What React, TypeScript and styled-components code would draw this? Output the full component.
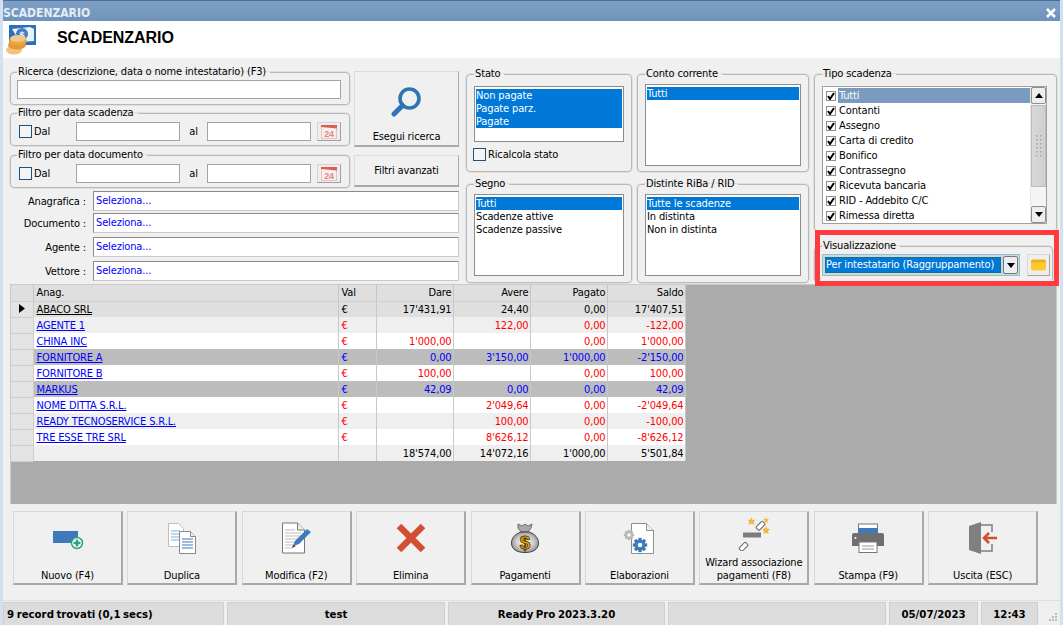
import React from "react";
import styled, { createGlobalStyle } from "styled-components";

const Global = createGlobalStyle`
  html, body { margin: 0; padding: 0; width: 1063px; height: 625px; overflow: hidden; background: #f0f0f0; }
  #root { width: 1063px; height: 625px; }
  * { box-sizing: border-box; }
`;

const UI_FONT = `"DejaVu Sans Condensed", "Noto Sans", "Liberation Sans", sans-serif`;

const Win = styled.div`
  width: 1063px; height: 625px; display: flex; flex-direction: column;
  background: #f0f0f0; border-left: 3px solid #d3e0ee; border-right: 3px solid #d3e0ee;
  font: 11px ${UI_FONT}; letter-spacing: -0.14px; color: #000; overflow: hidden;
`;
const TitleBar = styled.div`
  height: 21px; margin: 0 -3px; padding: 4px 3px 0 3px; flex: none;
  display: flex; justify-content: space-between; align-items: center;
  border-top: 1px solid #4d6f96;
  background: linear-gradient(#7f9fc5, #6f93bb);
  color: #e4edf5; font-weight: bold; font-size: 12px; letter-spacing: 0;
`;
const CloseBox = styled.div`
  width: 10px; height: 10px; margin-right: 4px; display: flex;
`;
const Header = styled.div`
  height: 37px; flex: none; background: #fff; display: flex; align-items: center; gap: 21px; padding-left: 3px;
`;
const HeaderTitle = styled.h1`
  margin: 0 0 3px; font: bold 16px "Liberation Sans", Arial, sans-serif; letter-spacing: -0.05px; color: #000;
`;
const Filters = styled.div`
  flex: none; display: grid; grid-template-columns: 451px 166px 172px 243px; column-gap: 5px;
  padding: 7px 0 0 7px; height: 226px;
`;
const LeftCol = styled.div`
  display: flex; flex-direction: column; width: 449px;
`;
const TopLeft = styled.div`
  display: grid; grid-template-columns: 340px 105px; column-gap: 4px;
`;
const Stack = styled.div<{ $top?: number }>`
  display: flex; flex-direction: column; padding-top: ${p => p.$top || 0}px;
`;
const Group = styled.fieldset<{ $h: number; $pad?: string; $mt?: number }>`
  margin: ${p => p.$mt || 0}px 0 0; height: ${p => p.$h}px; min-width: 0; padding: ${p => p.$pad || "0 7px"};
  border: 1px solid #b9b9b9; border-radius: 4px; box-shadow: 0 0 0 0.5px #d0d0d0;
`;
const Legend = styled.legend`
  padding: 0 4px 0 1px; margin-left: 0; font-size: 11px; line-height: 14px; height: 14px;
`;
const PlainInput = styled.div<{ $w: number; $mt?: number }>`
  width: ${p => p.$w}px; height: 19px; margin-top: ${p => p.$mt || 0}px; background: #fff; border: 1px solid #a3a3a3; flex: none;
`;
const DateRow = styled.div`
  display: flex; align-items: center; height: 19px; margin-top: 2px; margin-left: -1px;
`;
const Check = styled.span<{ $ml?: number }>`
  width: 13px; height: 13px; border: 1px solid #1c5180; background: #f4f4f4; flex: none; margin: 0 2px 0 ${p => p.$ml ?? 2}px;
`;
const DalLabel = styled.span`width: 42px; flex: none;`;
const AlLabel = styled.span`width: 27px; text-align: center; flex: none;`;
const CalBtn = styled.div`
  width: 24px; height: 19px; margin-left: 6px; background: #eee; display: flex; align-items: center; justify-content: center;
  border: 1px solid #d4d4d4; border-right: 1px solid #9f9f9f; border-bottom: 1px solid #9f9f9f; flex: none;
`;
const BtnCol = styled.div`
  display: flex; flex-direction: column; padding-top: 6px;
`;
const FlatBtn = styled.div<{ $h: number; $mt?: number }>`
  height: ${p => p.$h}px; margin-top: ${p => p.$mt || 0}px; background: #f0f0f0;
  display: flex; flex-direction: column; align-items: center; justify-content: space-between;
  border: 1px solid #dadada; border-right: 1px solid #a9a9a9; border-bottom: 2px solid #a9a9a9;
`;
const SearchIconWrap = styled.div`padding-top: 14px; display: flex;`;
const BtnText = styled.span`padding-bottom: 2px;`;
const CenterText = styled.span`margin: auto;`;
const Pick = styled.div<{ $mt: number }>`
  display: flex; align-items: center; margin-top: ${p => p.$mt}px;
`;
const PickLabel = styled.div`
  width: 80px; text-align: right; padding-right: 4px; flex: none;
`;
const PickBox = styled.div`
  width: 366px; height: 20px; background: #fff; color: #0000ff; padding: 0 0 0 2px; line-height: 18px;
  border: 1px solid #c8c8c8; border-top: 1px solid #8a8a8a; border-left: 1px solid #8a8a8a; margin-left: 3px;
`;
const ColStack = styled.div`display: flex; flex-direction: column; row-gap: 5px; padding-top: 2px;`;
const ListBox = styled.div<{ $h: number; $mt?: number }>`
  height: ${p => p.$h}px; margin-top: ${p => p.$mt || 0}px; background: #fff;
  border: 1px solid #8c8c8c; padding: 2px 1px 1px;
`;
const Opt = styled.div<{ $sel?: boolean }>`
  height: 13px; line-height: 13px; padding-left: 0;
  background: ${p => (p.$sel ? "#0078d7" : "transparent")};
  color: ${p => (p.$sel ? "#fff" : "#000")};
`;
const CheckRow = styled.div`
  display: flex; align-items: center; height: 13px; margin-top: 6px; margin-left: -1px;
`;
const Tipo = styled.div`
  display: flex; height: 138px; margin-top: 5px; width: 225px; background: #fff; border: 1px solid #a0a0a0;
`;
const TipoItems = styled.div`flex: 1; padding: 1px 0 0 3px; min-width: 0;`;
const TipoRow = styled.div`
  display: flex; align-items: center; height: 15px;
`;
const TipoBox = styled.span`
  width: 10px; height: 10px; border: 1px solid #8f8f8f; flex: none; margin-right: 2px; background: #fff; display: flex;
`;
const TipoText = styled.span<{ $sel?: boolean }>`
  flex: 1; height: 15px; line-height: 15px; padding-left: 1px;
  background: ${p => (p.$sel ? "#7a9abf" : "transparent")}; color: ${p => (p.$sel ? "#fff" : "#000")};
`;
const Scroll = styled.div`
  width: 16px; flex: none; display: flex; flex-direction: column; background: #f4f4f4; border-left: 1px solid #e8e8e8;
`;
const ScrollBtn = styled.div`
  height: 17px; background: #eee; border: 1px solid #8e8e8e; border-radius: 2px; display: flex; align-items: center; justify-content: center; flex: none;
`;
const Thumb = styled.div`
  height: 82px; margin-top: 1px; background: linear-gradient(90deg, #d8d8d8, #cfcfcf); border: 1px solid #bdbdbd; flex: none; display: flex; align-items: center; justify-content: center;
`;
const ScrollGap = styled.div`flex: 1;`;
const VisWrap = styled.div`
  position: relative; margin-top: 7px; padding-right: 4px; flex: none;
`;
const RedMark = styled.div`
  position: absolute; left: 1px; top: -9px; width: 244px; height: 56px; border: 5px solid #ff3b40; pointer-events: none;
`;
const VisRow = styled.div`display: flex; align-items: center; margin-top: 1px;`;
const Combo = styled.div`
  width: 198px; height: 22px; flex: none; background: #a9e6f1; border: 1px solid #b4b4b4; padding: 2px; display: flex;
`;
const ComboText = styled.div`
  flex: 1; background: #0078d7; color: #fff; line-height: 15px; padding-left: 1px; outline: 1px dotted #7a4a10; outline-offset: -1px; white-space: nowrap; overflow: hidden;
`;
const ComboArrow = styled.div`
  width: 15px; margin: -1px -1px -1px 2px; background: #eee; border: 1px solid #777; border-radius: 2px; display: flex; align-items: center; justify-content: center; flex: none;
`;
const FolderBtn = styled.div`
  width: 23px; height: 22px; margin-left: 7px; background: #eee; display: flex; align-items: center; justify-content: center; flex: none;
  border: 1px solid #d8d8d8; border-right: 1px solid #a6a6a6; border-bottom: 1px solid #a6a6a6;
`;
const GridArea = styled.div`
  flex: none; height: 220px; margin-left: 7px; width: 1047px; background: #ababab; border: 1px solid #c9c9c9; border-bottom: 0;
`;
const Table = styled.table`
  border-collapse: collapse; table-layout: fixed; width: 674px; font-size: 11px;
`;
const Th = styled.th<{ $w: number; $right?: boolean }>`
  width: ${p => p.$w}px; height: 16px; padding: 0 1px 0 3px; font-weight: normal; background: #dfdfdf;
  text-align: ${p => (p.$right ? "right" : "left")}; border-right: 1px solid #c4c4c4; border-bottom: 1px solid #d0d0d0;
`;
const Tr = styled.tr<{ $bg: string; $fg: string }>`
  background: ${p => p.$bg}; color: ${p => p.$fg};
`;
const Td = styled.td<{ $right?: boolean }>`
  height: 16px; padding: 0 1px 0 3px; white-space: nowrap; overflow: hidden;
  text-align: ${p => (p.$right ? "right" : "left")}; border-right: 1px solid #c8c8c8;
`;
const RowHead = styled.td`
  height: 16px; padding: 0; background: #e3e3e3; border: 1px solid #cdcdcd; border-left: 0; text-align: center;
`;
const NameLink = styled.span<{ $c: string }>`color: ${p => p.$c}; text-decoration: underline;`;
const Toolbar = styled.div`
  flex: none; display: flex; gap: 4.4px; margin: 7px 0 0 10px; height: 75px;
`;
const ToolBtn = styled.div`
  width: 110px; height: 74px; background: #f0f0f0; display: flex; flex-direction: column; align-items: center;
  border: 1px solid #d8d8d8; border-right: 2px solid #a9a9a9; border-bottom: 2px solid #a9a9a9; flex: none;
`;
const ToolIcon = styled.div<{ $pt: number }>`
  height: 44px; flex: none; display: flex; align-items: center; justify-content: center; padding-top: ${p => p.$pt}px;
`;
const ToolText = styled.div`
  flex: 1; display: flex; align-items: flex-end; justify-content: center; text-align: center; line-height: 13px; padding-bottom: 1px;
`;
const StatusBar = styled.div`
  margin: 14px -3px 0 0; flex: none; height: 25px; display: flex; gap: 3px; background: #efefef; border-top: 1px solid #e0e0e0; padding-top: 1px; position: relative;
  font: bold 10.2px "DejaVu Sans", Verdana, sans-serif; letter-spacing: 0; word-spacing: -1px;
`;
const StatusCell = styled.div<{ $w: number; $left?: boolean }>`
  width: ${p => p.$w}px; flex: none; background: #dcdcdc; border: 1px solid #cfcfcf; border-bottom: 0; display: flex; align-items: center;
  justify-content: ${p => (p.$left ? "flex-start" : "center")}; padding-left: ${p => (p.$left ? 3 : 0)}px;
`;
const Grip = styled.div`position: absolute; right: 6px; bottom: 4px; display: flex;`;

const Gear = ({ cx, cy, r, c }: { cx: number; cy: number; r: number; c: string }) => (
  <g>
    {[0, 45, 90, 135].map(a => (
      <rect key={a} x={cx - r * 0.3} y={cy - r * 1.3} width={r * 0.6} height={r * 2.6} fill={c} transform={`rotate(${a} ${cx} ${cy})`} />
    ))}
    <circle cx={cx} cy={cy} r={r} fill={c} />
    <circle cx={cx} cy={cy} r={r * 0.42} fill="#fff" />
  </g>
);

const Logo = () => (
  <svg width="30" height="30" viewBox="0 0 30 30">
    <rect x="3" y="0" width="27" height="20" fill="#2f6fb8" />
    <path d="M6 4l18-2 4 2v12l-14 1z" fill="#e9f1f9" />
    <circle cx="16" cy="9" r="6" fill="#3f7fc4" />
    <text x="16" y="12.500" fontSize="9" fontWeight="bold" textAnchor="middle" fill="#fff" fontFamily="Liberation Sans">$</text>
    <ellipse cx="8" cy="25" rx="8" ry="4.500" fill="#f3c27c" />
    <ellipse cx="11" cy="20" rx="9" ry="4.500" fill="#e39a35" />
    <ellipse cx="12" cy="16" rx="9" ry="4.500" fill="#e8a548" />
    <ellipse cx="12" cy="13.500" rx="8" ry="3.500" fill="#f4c888" />
  </svg>
);
const Cal = () => (
  <svg width="16" height="15" viewBox="0 0 16 15">
    <rect x="0.5" y="1.5" width="15" height="13" fill="#fbeeee" stroke="#e8c4c0" />
    <path d="M0 1h16v3.5L0 3z" fill="#d8604f" />
    <text x="8" y="13" fontSize="9" fontWeight="bold" textAnchor="middle" fill="#e08a80" fontFamily="Liberation Sans">24</text>
  </svg>
);
const Magnifier = () => (
  <svg width="32" height="32" viewBox="0 0 32 32">
    <circle cx="18.5" cy="12.5" r="9.5" fill="none" stroke="#2f75b5" strokeWidth="3.6" />
    <path d="M11.5 19.5L3 28" stroke="#2f75b5" strokeWidth="5" strokeLinecap="round" />
  </svg>
);
const Tick = () => (
  <svg width="8" height="8" viewBox="0 0 8 8"><path d="M1 4l2 3 4-6" fill="none" stroke="#000" strokeWidth="2" /></svg>
);
const Tri = ({ up }: { up?: boolean }) => (
  <svg width="8" height="5" viewBox="0 0 8 5"><path d={up ? "M0 5L4 0l4 5z" : "M0 0l4 5 4-5z"} fill="#000" /></svg>
);
const Folder = () => (
  <svg width="15" height="12" viewBox="0 0 15 12">
    <path d="M0 2q0-1.500 1.500-1.500h12Q15 .5 15 2v3H0z" fill="#eeb01c" />
    <path d="M0 3.500h15v6q0 2-2 2H2q-2 0-2-2z" fill="#fdc92e" />
  </svg>
);
const GripDots = () => (
  <svg width="6" height="24" viewBox="0 0 6 24">
    {[0, 1, 2, 3, 4, 5].map(i => <g key={i}><rect x="0" y={i * 4 + 1} width="1.500" height="1.500" fill="#a9a9a9" /><rect x="4" y={i * 4 + 1} width="1.500" height="1.500" fill="#a9a9a9" /></g>)}
  </svg>
);
const IconNew = () => (
  <svg width="32" height="32" viewBox="0 -1 32 32">
    <rect x="1" y="8" width="25" height="12" fill="#3d79bb" />
    <circle cx="25" cy="20" r="5.500" fill="#fff" stroke="#2da37a" strokeWidth="1.500" />
    <path d="M25 16.500v7M21.500 20h7" stroke="#2da37a" strokeWidth="2.500" />
  </svg>
);
const IconCopy = () => (
  <svg width="30" height="32" viewBox="0 0 30 32">
    <path d="M1.500 1.500h10l5 5v18h-15z" fill="#fff" stroke="#bdbdbd" />
    <path d="M4 9h9M4 12h9M4 15h9M4 18h9" stroke="#7db3e0" strokeWidth="1.200" />
    <path d="M12.500 9.500h11l5 5v17h-16z" fill="#fff" stroke="#8a8a8a" />
    <path d="M15 17h11M15 20h11M15 23h11M15 26h11" stroke="#3d79bb" strokeWidth="1.200" />
    <path d="M23.500 9.500v5h5" fill="#eee" stroke="#8a8a8a" />
  </svg>
);
const IconEdit = () => (
  <svg width="32" height="32" viewBox="-1 0 32 32">
    <path d="M1.500 1h15l7 7v23h-22z" fill="#fff" stroke="#777" />
    <path d="M16.500 1v7h7" fill="#eee" stroke="#777" />
    <path d="M4 8h10M4 11h16M4 14h16M4 17h14M4 20h11M4 23h9M4 26h7" stroke="#bdbdbd" />
    <path d="M12 24l2-5L26 7l4 3-12 12z" fill="#3d79bb" />
    <path d="M11 26l1-3 3 1z" fill="#333" />
  </svg>
);
const IconX = () => (
  <svg width="30" height="30" viewBox="0 0 30 30">
    <path d="M3 3l24 24M27 3L3 27" stroke="#d34f33" strokeWidth="6.500" />
  </svg>
);
const IconBag = () => (
  <svg width="28" height="30" viewBox="0 0 28 30">
    <defs>
      <radialGradient id="bagFill" cx="50%" cy="50%" r="55%">
        <stop offset="0%" stopColor="#ffffff" />
        <stop offset="55%" stopColor="#d2d2d2" />
        <stop offset="100%" stopColor="#8c8c8c" />
      </radialGradient>
    </defs>
    <path d="M7 1l4 2 3-2 3 2 4-2-1 4-3 4h-7L7 5z" fill="#a9a9a9" stroke="#555" strokeWidth="0.800" />
    <path d="M10 9C4 11 .5 15 .5 20c0 6 5 9.500 13.500 9.500S27.500 26 27.500 20C27.500 15 24 11 18 9z" fill="url(#bagFill)" stroke="#444" />
    <text x="14" y="25.500" fontSize="19" fontWeight="bold" textAnchor="middle" fill="#f5b400" stroke="#5a3a00" strokeWidth="0.900" fontFamily="Liberation Sans">$</text>
  </svg>
);
const IconGearDoc = () => (
  <svg width="32" height="32" viewBox="0 0 32 32">
    <path d="M8.500 1.500h15l7 7v23h-22z" fill="#fff" stroke="#8f8f8f" />
    <path d="M23.500 1.500v7h7" fill="#eee" stroke="#8f8f8f" />
    <Gear cx={6} cy={13} r={4} c="#b9b9b9" />
    <Gear cx={17} cy={23} r={5.500} c="#3d79bb" />
  </svg>
);
const IconWand = () => (
  <svg width="34" height="34" viewBox="0 0 34 34">
    <rect x="2" y="27.500" width="9" height="4.500" rx="1" fill="#fff" stroke="#666" transform="rotate(-45 6.500 29.700)" />
    <rect x="6" y="15.500" width="18" height="5" fill="#7d7d7d" />
    <rect x="19" y="6.500" width="9" height="4.500" rx="1" fill="#fff" stroke="#666" transform="rotate(-45 23.500 8.700)" />
    <path d="M14 0l1.500 3 3-.5-2 2.500 1 3-3-1.500-3 1.500 1-3-2-2.500 3 .5z" fill="#f2b544" />
    <path d="M29 9l1 2.500 3 .5-2 2 .5 3-2.500-1.500-2.500 1.500.5-3-2-2 3-.5z" fill="#f2b544" />
    <path d="M29 0l.8 2 2.200.3-1.600 1.500.4 2.200-1.800-1-1.800 1 .4-2.200L26 2.300l2.200-.3z" fill="#f2b544" />
  </svg>
);
const IconPrint = () => (
  <svg width="32" height="30" viewBox="0 0 32 30">
    <rect x="6.500" y="1" width="19" height="8" fill="#fff" stroke="#777" />
    <path d="M6 5h20v9H6z" fill="#3d79bb" />
    <path d="M0 12q0-2 2-2h28q2 0 2 2v11H0z" fill="#6f6f6f" />
    <rect x="7" y="19" width="18" height="10.500" fill="#fff" stroke="#777" />
    <path d="M10 23h12M10 26h12" stroke="#999" />
    <circle cx="3.500" cy="15" r="1" fill="#fff" />
  </svg>
);
const IconExit = () => (
  <svg width="28" height="32" viewBox="0 0 28 32">
    <path d="M0 4l12-4v32L0 28z" fill="#7f7f7f" />
    <path d="M12 3h11v7M23 22v7H12" fill="none" stroke="#7f7f7f" strokeWidth="1.500" />
    <path d="M28 16H16M20 11l-5 5 5 5" fill="none" stroke="#d34f33" strokeWidth="2.600" />
  </svg>
);

const tipi = ["Tutti", "Contanti", "Assegno", "Carta di credito", "Bonifico", "Contrassegno", "Ricevuta bancaria", "RID - Addebito C/C", "Rimessa diretta"];

type R = { n: string; v?: string; d: string; a: string; p: string; s: string; bg: string; fg: string; link: string; cur?: boolean };
const rows: R[] = [
  { n: "ABACO SRL", v: "€", d: "17'431,91", a: "24,40", p: "0,00", s: "17'407,51", bg: "#dfdfdf", fg: "#000", link: "#000", cur: true },
  { n: "AGENTE 1", v: "€", d: "", a: "122,00", p: "0,00", s: "-122,00", bg: "#efefef", fg: "#ff0000", link: "#0000ff" },
  { n: "CHINA INC", v: "€", d: "1'000,00", a: "", p: "0,00", s: "1'000,00", bg: "#fff", fg: "#ff0000", link: "#0000ff" },
  { n: "FORNITORE A", v: "€", d: "0,00", a: "3'150,00", p: "1'000,00", s: "-2'150,00", bg: "#bcbcbc", fg: "#0000ff", link: "#0000ff" },
  { n: "FORNITORE B", v: "€", d: "100,00", a: "", p: "0,00", s: "100,00", bg: "#fff", fg: "#ff0000", link: "#0000ff" },
  { n: "MARKUS", v: "€", d: "42,09", a: "0,00", p: "0,00", s: "42,09", bg: "#bcbcbc", fg: "#0000ff", link: "#0000ff" },
  { n: "NOME DITTA S.R.L.", v: "€", d: "", a: "2'049,64", p: "0,00", s: "-2'049,64", bg: "#fff", fg: "#ff0000", link: "#0000ff" },
  { n: "READY TECNOSERVICE S.R.L.", v: "€", d: "", a: "100,00", p: "0,00", s: "-100,00", bg: "#efefef", fg: "#ff0000", link: "#0000ff" },
  { n: "TRE ESSE TRE SRL", v: "€", d: "", a: "8'626,12", p: "0,00", s: "-8'626,12", bg: "#fff", fg: "#ff0000", link: "#0000ff" },
  { n: "", d: "18'574,00", a: "14'072,16", p: "1'000,00", s: "5'501,84", bg: "#efefef", fg: "#000", link: "#000" },
];

const tools: [string, React.ReactNode, number][] = [
  ["Nuovo (F4)", <IconNew />, 8], ["Duplica", <IconCopy />, 8], ["Modifica (F2)", <IconEdit />, 8], ["Elimina", <IconX />, 8],
  ["Pagamenti", <IconBag />, 8], ["Elaborazioni", <IconGearDoc />, 8], ["Wizard associazione pagamenti (F8)", <IconWand />, 0],
  ["Stampa (F9)", <IconPrint />, 8], ["Uscita (ESC)", <IconExit />, 8],
];

const DateGroup = ({ title, mt }: { title: string; mt: number }) => (
  <Group $h={40} $mt={mt} $pad="0 6px">
    <Legend>{title}</Legend>
    <DateRow>
      <Check $ml={3} /><DalLabel>Dal</DalLabel><PlainInput $w={104} /><AlLabel>al</AlLabel><PlainInput $w={104} />
      <CalBtn><Cal /></CalBtn>
    </DateRow>
  </Group>
);

export default function App() {
  return (
    <Win>
      <Global />
      <TitleBar>
        <span>SCADENZARIO</span>
        <CloseBox><svg width="10" height="10" viewBox="0 0 10 10"><path d="M1 1l8 8M9 1l-8 8" stroke="#fff" strokeWidth="2.500" /></svg></CloseBox>
      </TitleBar>
      <Header><Logo /><HeaderTitle>SCADENZARIO</HeaderTitle></Header>
      <Filters>
        <LeftCol>
          <TopLeft>
            <Stack>
              <Group $h={40} $pad="0 6px">
                <Legend>Ricerca (descrizione, data o nome intestatario) (F3)</Legend>
                <PlainInput $w={324} $mt={1} />
              </Group>
              <DateGroup title="Filtro per data scadenza" mt={1} />
              <DateGroup title="Filtro per data documento" mt={2} />
            </Stack>
            <BtnCol>
              <FlatBtn $h={76}>
                <SearchIconWrap><Magnifier /></SearchIconWrap>
                <BtnText>Esegui ricerca</BtnText>
              </FlatBtn>
              <FlatBtn $h={32} $mt={8}><CenterText>Filtri avanzati</CenterText></FlatBtn>
            </BtnCol>
          </TopLeft>
          <Pick $mt={3}><PickLabel>Anagrafica :</PickLabel><PickBox>Seleziona...</PickBox></Pick>
          <Pick $mt={2}><PickLabel>Documento :</PickLabel><PickBox>Seleziona...</PickBox></Pick>
          <Pick $mt={4}><PickLabel>Agente :</PickLabel><PickBox>Seleziona...</PickBox></Pick>
          <Pick $mt={4}><PickLabel>Vettore :</PickLabel><PickBox>Seleziona...</PickBox></Pick>
        </LeftCol>
        <ColStack>
          <Group $h={105}>
            <Legend>Stato</Legend>
            <ListBox $h={56} $mt={5}>
              <Opt $sel>Non pagate</Opt><Opt $sel>Pagate parz.</Opt><Opt $sel>Pagate</Opt>
            </ListBox>
            <CheckRow><Check $ml={0} />Ricalcola stato</CheckRow>
          </Group>
          <Group $h={106}>
            <Legend>Segno</Legend>
            <ListBox $h={82} $mt={3}>
              <Opt $sel>Tutti</Opt><Opt>Scadenze attive</Opt><Opt>Scadenze passive</Opt>
            </ListBox>
          </Group>
        </ColStack>
        <ColStack>
          <Group $h={105}>
            <Legend>Conto corrente</Legend>
            <ListBox $h={82} $mt={3}><Opt $sel>Tutti</Opt></ListBox>
          </Group>
          <Group $h={106}>
            <Legend>Distinte RiBa / RID</Legend>
            <ListBox $h={82} $mt={3}>
              <Opt $sel>Tutte le scadenze</Opt><Opt>In distinta</Opt><Opt>Non in distinta</Opt>
            </ListBox>
          </Group>
        </ColStack>
        <Stack $top={2}>
          <Group $h={165}>
            <Legend>Tipo scadenza</Legend>
            <Tipo>
              <TipoItems>
                {tipi.map((t, i) => (
                  <TipoRow key={t}><TipoBox><Tick /></TipoBox><TipoText $sel={i === 0}>{t}</TipoText></TipoRow>
                ))}
              </TipoItems>
              <Scroll>
                <ScrollBtn><Tri up /></ScrollBtn>
                <Thumb><GripDots /></Thumb>
                <ScrollGap />
                <ScrollBtn><Tri /></ScrollBtn>
              </Scroll>
            </Tipo>
          </Group>
          <VisWrap>
            <Group $h={44}>
              <Legend>Visualizzazione</Legend>
              <VisRow>
                <Combo><ComboText>Per intestatario (Raggruppamento)</ComboText><ComboArrow><Tri /></ComboArrow></Combo>
                <FolderBtn><Folder /></FolderBtn>
              </VisRow>
            </Group>
            <RedMark />
          </VisWrap>
        </Stack>
      </Filters>
      <GridArea>
        <Table>
          <thead>
            <tr>
              <Th $w={22} /><Th $w={305}>Anag.</Th><Th $w={38}>Val</Th>
              <Th $w={77} $right>Dare</Th><Th $w={77} $right>Avere</Th><Th $w={77} $right>Pagato</Th><Th $w={78} $right>Saldo</Th>
            </tr>
          </thead>
          <tbody>
            {rows.map((r, i) => (
              <Tr key={i} $bg={r.bg} $fg={r.fg}>
                <RowHead>{r.cur ? <svg width="6" height="9" viewBox="0 0 6 9"><path d="M0 0l6 4.500L0 9z" fill="#000" /></svg> : null}</RowHead>
                <Td><NameLink $c={r.link}>{r.n}</NameLink></Td>
                <Td>{r.v}</Td>
                <Td $right>{r.d}</Td><Td $right>{r.a}</Td><Td $right>{r.p}</Td><Td $right>{r.s}</Td>
              </Tr>
            ))}
          </tbody>
        </Table>
      </GridArea>
      <Toolbar>
        {tools.map(([t, ic, pt]) => (
          <ToolBtn key={t}><ToolIcon $pt={pt}>{ic}</ToolIcon><ToolText>{t}</ToolText></ToolBtn>
        ))}
      </Toolbar>
      <StatusBar>
        <StatusCell $w={221} $left>9 record trovati (0,1 secs)</StatusCell>
        <StatusCell $w={218}>test</StatusCell>
        <StatusCell $w={217}>Ready Pro 2023.3.20</StatusCell>
        <StatusCell $w={218} />
        <StatusCell $w={89}>05/07/2023</StatusCell>
        <StatusCell $w={57}>12:43</StatusCell>
        <Grip><svg width="8" height="8" viewBox="0 0 8 8"><path d="M6 0h2v2H6zM3 3h2v2H3zM6 3h2v2H6zM0 6h2v2H0zM3 6h2v2H3zM6 6h2v2H6z" fill="#bdbdbd" /></svg></Grip>
      </StatusBar>
    </Win>
  );
}
